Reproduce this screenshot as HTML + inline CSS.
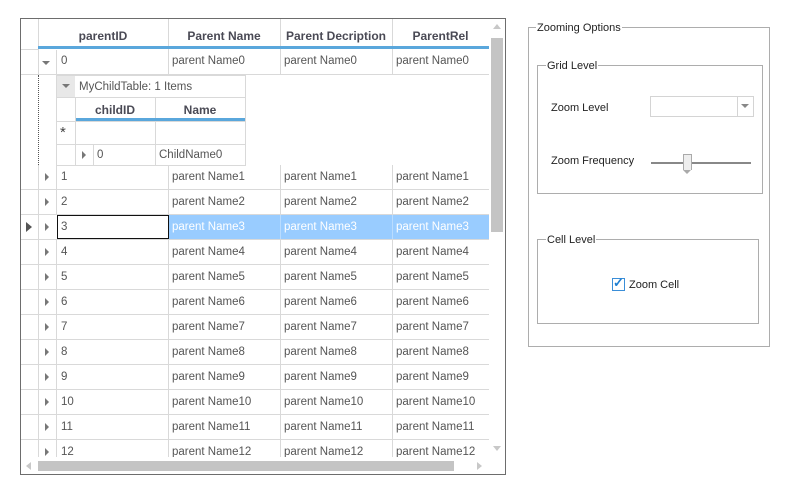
<!DOCTYPE html>
<html><head><meta charset="utf-8"><style>
*{margin:0;padding:0;box-sizing:border-box}
body{width:788px;height:493px;background:#fff;position:relative;overflow:hidden;font-family:"Liberation Sans",sans-serif;font-size:11.5px;color:#555}
.a{position:absolute}
.grid{left:20px;top:18px;width:486px;height:457px;border:1px solid #6d6d6d;overflow:hidden}
.hl{position:absolute;height:1px;background:#d9d9d9}
.vl{position:absolute;width:1px;background:#d9d9d9}
.t{position:absolute;white-space:nowrap;margin-top:1px}
.hd{font-weight:bold;color:#4a4a55;font-size:12px;text-align:center;margin-top:2px}
.tri{position:absolute;width:0;height:0;border-top:4px solid transparent;border-bottom:4px solid transparent;border-left:4px solid #777}
.dn{position:absolute;width:0;height:0;border-left:4px solid transparent;border-right:4px solid transparent;border-top:4px solid #777}
.gb{position:absolute;border:1px solid #adadad}
.gl{position:absolute;background:#fff;padding:0 1px;color:#222;font-size:11px;white-space:nowrap;margin-top:2px}
.lb{position:absolute;color:#222;font-size:11px;white-space:nowrap;margin-top:2px}
</style></head><body>
<div class="a grid">
<div class="vl" style="left:17px;top:0;height:31px"></div>
<div class="vl" style="left:147px;top:0;height:31px"></div>
<div class="vl" style="left:259px;top:0;height:31px"></div>
<div class="vl" style="left:371px;top:0;height:31px"></div>
<div class="t hd" style="left:17px;width:130px;top:8px">parentID</div>
<div class="t hd" style="left:147px;width:112px;top:8px">Parent Name</div>
<div class="t hd" style="left:259px;width:112px;top:8px">Parent Decription</div>
<div class="t hd" style="left:371px;width:97px;top:8px">ParentRel</div>
<div class="a" style="left:17px;top:27px;width:451px;height:3px;background:#5aa7dc"></div>
<div class="hl" style="left:0;top:30px;width:17px"></div>
<div class="vl" style="left:17px;top:30px;height:25px"></div>
<div class="vl" style="left:35px;top:31px;height:24px"></div>
<div class="vl" style="left:147px;top:31px;height:24px"></div>
<div class="vl" style="left:259px;top:31px;height:24px"></div>
<div class="vl" style="left:371px;top:31px;height:24px"></div>
<div class="dn" style="left:21px;top:42px"></div>
<div class="t" style="left:40px;top:35px">0</div>
<div class="t" style="left:151px;top:35px">parent Name0</div>
<div class="t" style="left:263px;top:35px">parent Name0</div>
<div class="t" style="left:375px;top:35px">parent Name0</div>
<div class="hl" style="left:0;top:55px;width:468px"></div>
<div class="a" style="left:17px;top:56px;height:90px;border-left:1px dotted #555"></div>
<div class="a" style="left:35px;top:56px;width:190px;height:91px;border:1px solid #d9d9d9"></div>
<div class="a" style="left:36px;top:57px;width:18px;height:21px;background:#e8e8e8"></div>
<div class="dn" style="left:41px;top:65px"></div>
<div class="t" style="left:58px;top:61px">MyChildTable: 1 Items</div>
<div class="hl" style="left:36px;top:78px;width:188px"></div>
<div class="vl" style="left:54px;top:79px;height:67px"></div>
<div class="vl" style="left:134px;top:79px;height:67px"></div>
<div class="t hd" style="left:54px;width:80px;top:82px">childID</div>
<div class="t hd" style="left:134px;width:90px;top:82px">Name</div>
<div class="a" style="left:55px;top:99px;width:169px;height:3px;background:#5aa7dc"></div>
<div class="hl" style="left:36px;top:102px;width:188px"></div>
<div class="t" style="left:39px;top:104px;font-size:15px;color:#444">*</div>
<div class="hl" style="left:36px;top:125px;width:188px"></div>
<div class="vl" style="left:72px;top:126px;height:20px"></div>
<div class="tri" style="left:61px;top:132px"></div>
<div class="t" style="left:76px;top:129px">0</div>
<div class="t" style="left:138px;top:129px">ChildName0</div>

<div class="a" style="left:470px;top:19px;width:12px;height:194px;background:#c4c4c4"></div>
<div class="a" style="left:472px;top:5px;width:0;height:0;border-left:4px solid transparent;border-right:4px solid transparent;border-bottom:5px solid #c8c8c8"></div>
<div class="a" style="left:472px;top:427px;width:0;height:0;border-left:4px solid transparent;border-right:4px solid transparent;border-top:5px solid #c8c8c8"></div>
<div class="a" style="left:17px;top:442px;width:416px;height:10px;background:#c4c4c4"></div>
<div class="a" style="left:5px;top:443px;width:0;height:0;border-top:4px solid transparent;border-bottom:4px solid transparent;border-right:5px solid #c8c8c8"></div>
<div class="a" style="left:456px;top:443px;width:0;height:0;border-top:4px solid transparent;border-bottom:4px solid transparent;border-left:5px solid #c8c8c8"></div>
</div>

<div class="a" style="left:21px;top:19px;width:468px;height:438px;overflow:hidden">
<div style="position:absolute;left:0;top:146px;width:468px">
<div style="position:absolute;top:0;left:0;width:468px;height:25px"><div class="vl" style="left:17px;top:0;height:25px"></div><div class="vl" style="left:35px;top:0;height:25px"></div><div class="vl" style="left:147px;top:0;height:25px"></div><div class="vl" style="left:259px;top:0;height:25px"></div><div class="vl" style="left:371px;top:0;height:25px"></div><div class="tri" style="left:24px;top:8px"></div><div class="t" style="left:40px;top:5px">1</div><div class="t" style="left:151px;top:5px">parent Name1</div><div class="t" style="left:263px;top:5px">parent Name1</div><div class="t" style="left:375px;top:5px">parent Name1</div><div class="hl" style="left:0;top:24px;width:468px"></div></div>
<div style="position:absolute;top:25px;left:0;width:468px;height:25px"><div class="vl" style="left:17px;top:0;height:25px"></div><div class="vl" style="left:35px;top:0;height:25px"></div><div class="vl" style="left:147px;top:0;height:25px"></div><div class="vl" style="left:259px;top:0;height:25px"></div><div class="vl" style="left:371px;top:0;height:25px"></div><div class="tri" style="left:24px;top:8px"></div><div class="t" style="left:40px;top:5px">2</div><div class="t" style="left:151px;top:5px">parent Name2</div><div class="t" style="left:263px;top:5px">parent Name2</div><div class="t" style="left:375px;top:5px">parent Name2</div><div class="hl" style="left:0;top:24px;width:468px"></div></div>
<div style="position:absolute;top:50px;left:0;width:468px;height:25px"><div class="a" style="left:148px;top:0;width:320px;height:24px;background:#99ccff"></div><div class="vl" style="left:17px;top:0;height:25px"></div><div class="vl" style="left:259px;top:0;height:25px;background:#b9dcff"></div><div class="vl" style="left:371px;top:0;height:25px;background:#b9dcff"></div><div class="tri" style="left:5px;top:7px;border-top-width:5px;border-bottom-width:5px;border-left:6px solid #555"></div><div class="tri" style="left:24px;top:8px"></div><div class="a" style="left:36px;top:0;width:112px;height:24px;border:1.5px solid #111"></div><div class="t" style="left:40px;top:5px">3</div><div class="t" style="left:151px;top:5px;color:#fff">parent Name3</div><div class="t" style="left:263px;top:5px;color:#fff">parent Name3</div><div class="t" style="left:375px;top:5px;color:#fff">parent Name3</div><div class="hl" style="left:0;top:24px;width:468px"></div></div>
<div style="position:absolute;top:75px;left:0;width:468px;height:25px"><div class="vl" style="left:17px;top:0;height:25px"></div><div class="vl" style="left:35px;top:0;height:25px"></div><div class="vl" style="left:147px;top:0;height:25px"></div><div class="vl" style="left:259px;top:0;height:25px"></div><div class="vl" style="left:371px;top:0;height:25px"></div><div class="tri" style="left:24px;top:8px"></div><div class="t" style="left:40px;top:5px">4</div><div class="t" style="left:151px;top:5px">parent Name4</div><div class="t" style="left:263px;top:5px">parent Name4</div><div class="t" style="left:375px;top:5px">parent Name4</div><div class="hl" style="left:0;top:24px;width:468px"></div></div>
<div style="position:absolute;top:100px;left:0;width:468px;height:25px"><div class="vl" style="left:17px;top:0;height:25px"></div><div class="vl" style="left:35px;top:0;height:25px"></div><div class="vl" style="left:147px;top:0;height:25px"></div><div class="vl" style="left:259px;top:0;height:25px"></div><div class="vl" style="left:371px;top:0;height:25px"></div><div class="tri" style="left:24px;top:8px"></div><div class="t" style="left:40px;top:5px">5</div><div class="t" style="left:151px;top:5px">parent Name5</div><div class="t" style="left:263px;top:5px">parent Name5</div><div class="t" style="left:375px;top:5px">parent Name5</div><div class="hl" style="left:0;top:24px;width:468px"></div></div>
<div style="position:absolute;top:125px;left:0;width:468px;height:25px"><div class="vl" style="left:17px;top:0;height:25px"></div><div class="vl" style="left:35px;top:0;height:25px"></div><div class="vl" style="left:147px;top:0;height:25px"></div><div class="vl" style="left:259px;top:0;height:25px"></div><div class="vl" style="left:371px;top:0;height:25px"></div><div class="tri" style="left:24px;top:8px"></div><div class="t" style="left:40px;top:5px">6</div><div class="t" style="left:151px;top:5px">parent Name6</div><div class="t" style="left:263px;top:5px">parent Name6</div><div class="t" style="left:375px;top:5px">parent Name6</div><div class="hl" style="left:0;top:24px;width:468px"></div></div>
<div style="position:absolute;top:150px;left:0;width:468px;height:25px"><div class="vl" style="left:17px;top:0;height:25px"></div><div class="vl" style="left:35px;top:0;height:25px"></div><div class="vl" style="left:147px;top:0;height:25px"></div><div class="vl" style="left:259px;top:0;height:25px"></div><div class="vl" style="left:371px;top:0;height:25px"></div><div class="tri" style="left:24px;top:8px"></div><div class="t" style="left:40px;top:5px">7</div><div class="t" style="left:151px;top:5px">parent Name7</div><div class="t" style="left:263px;top:5px">parent Name7</div><div class="t" style="left:375px;top:5px">parent Name7</div><div class="hl" style="left:0;top:24px;width:468px"></div></div>
<div style="position:absolute;top:175px;left:0;width:468px;height:25px"><div class="vl" style="left:17px;top:0;height:25px"></div><div class="vl" style="left:35px;top:0;height:25px"></div><div class="vl" style="left:147px;top:0;height:25px"></div><div class="vl" style="left:259px;top:0;height:25px"></div><div class="vl" style="left:371px;top:0;height:25px"></div><div class="tri" style="left:24px;top:8px"></div><div class="t" style="left:40px;top:5px">8</div><div class="t" style="left:151px;top:5px">parent Name8</div><div class="t" style="left:263px;top:5px">parent Name8</div><div class="t" style="left:375px;top:5px">parent Name8</div><div class="hl" style="left:0;top:24px;width:468px"></div></div>
<div style="position:absolute;top:200px;left:0;width:468px;height:25px"><div class="vl" style="left:17px;top:0;height:25px"></div><div class="vl" style="left:35px;top:0;height:25px"></div><div class="vl" style="left:147px;top:0;height:25px"></div><div class="vl" style="left:259px;top:0;height:25px"></div><div class="vl" style="left:371px;top:0;height:25px"></div><div class="tri" style="left:24px;top:8px"></div><div class="t" style="left:40px;top:5px">9</div><div class="t" style="left:151px;top:5px">parent Name9</div><div class="t" style="left:263px;top:5px">parent Name9</div><div class="t" style="left:375px;top:5px">parent Name9</div><div class="hl" style="left:0;top:24px;width:468px"></div></div>
<div style="position:absolute;top:225px;left:0;width:468px;height:25px"><div class="vl" style="left:17px;top:0;height:25px"></div><div class="vl" style="left:35px;top:0;height:25px"></div><div class="vl" style="left:147px;top:0;height:25px"></div><div class="vl" style="left:259px;top:0;height:25px"></div><div class="vl" style="left:371px;top:0;height:25px"></div><div class="tri" style="left:24px;top:8px"></div><div class="t" style="left:40px;top:5px">10</div><div class="t" style="left:151px;top:5px">parent Name10</div><div class="t" style="left:263px;top:5px">parent Name10</div><div class="t" style="left:375px;top:5px">parent Name10</div><div class="hl" style="left:0;top:24px;width:468px"></div></div>
<div style="position:absolute;top:250px;left:0;width:468px;height:25px"><div class="vl" style="left:17px;top:0;height:25px"></div><div class="vl" style="left:35px;top:0;height:25px"></div><div class="vl" style="left:147px;top:0;height:25px"></div><div class="vl" style="left:259px;top:0;height:25px"></div><div class="vl" style="left:371px;top:0;height:25px"></div><div class="tri" style="left:24px;top:8px"></div><div class="t" style="left:40px;top:5px">11</div><div class="t" style="left:151px;top:5px">parent Name11</div><div class="t" style="left:263px;top:5px">parent Name11</div><div class="t" style="left:375px;top:5px">parent Name11</div><div class="hl" style="left:0;top:24px;width:468px"></div></div>
<div style="position:absolute;top:275px;left:0;width:468px;height:25px"><div class="vl" style="left:17px;top:0;height:25px"></div><div class="vl" style="left:35px;top:0;height:25px"></div><div class="vl" style="left:147px;top:0;height:25px"></div><div class="vl" style="left:259px;top:0;height:25px"></div><div class="vl" style="left:371px;top:0;height:25px"></div><div class="tri" style="left:24px;top:8px"></div><div class="t" style="left:40px;top:5px">12</div><div class="t" style="left:151px;top:5px">parent Name12</div><div class="t" style="left:263px;top:5px">parent Name12</div><div class="t" style="left:375px;top:5px">parent Name12</div></div>
</div>
</div>

<div class="gb" style="left:528px;top:27px;width:242px;height:320px"></div>
<div class="gl" style="left:536px;top:20px">Zooming Options</div>
<div class="gb" style="left:537px;top:65px;width:226px;height:129px"></div>
<div class="gl" style="left:546px;top:58px">Grid Level</div>
<div class="lb" style="left:551px;top:100px">Zoom Level</div>
<div class="a" style="left:650px;top:96px;width:104px;height:21px;border:1px solid #d4d4d4"></div>
<div class="a" style="left:737px;top:97px;width:1px;height:19px;background:#d4d4d4"></div>
<div class="dn" style="left:741px;top:104px;border-top-color:#888"></div>
<div class="lb" style="left:551px;top:153px">Zoom Frequency</div>
<div class="a" style="left:651px;top:162px;width:100px;height:2px;background:#888"></div>
<div class="a" style="left:683px;top:154px;width:9px;height:16px;background:#eee;border:1px solid #aaa;border-bottom:none"></div>
<div class="a" style="left:683px;top:170px;width:0;height:0;border-left:4.5px solid transparent;border-right:4.5px solid transparent;border-top:4px solid #aaa"></div>
<div class="gb" style="left:537px;top:239px;width:222px;height:85px"></div>
<div class="gl" style="left:546px;top:232px">Cell Level</div>
<div class="a" style="left:612px;top:278px;width:13px;height:13px;border:1px solid #3a8ed8;background:#fff"></div>
<div class="a" style="left:613px;top:275px;color:#1f7fd1;font-size:13px;font-weight:bold">✓</div>
<div class="lb" style="left:629px;top:277px">Zoom Cell</div>
</body></html>
